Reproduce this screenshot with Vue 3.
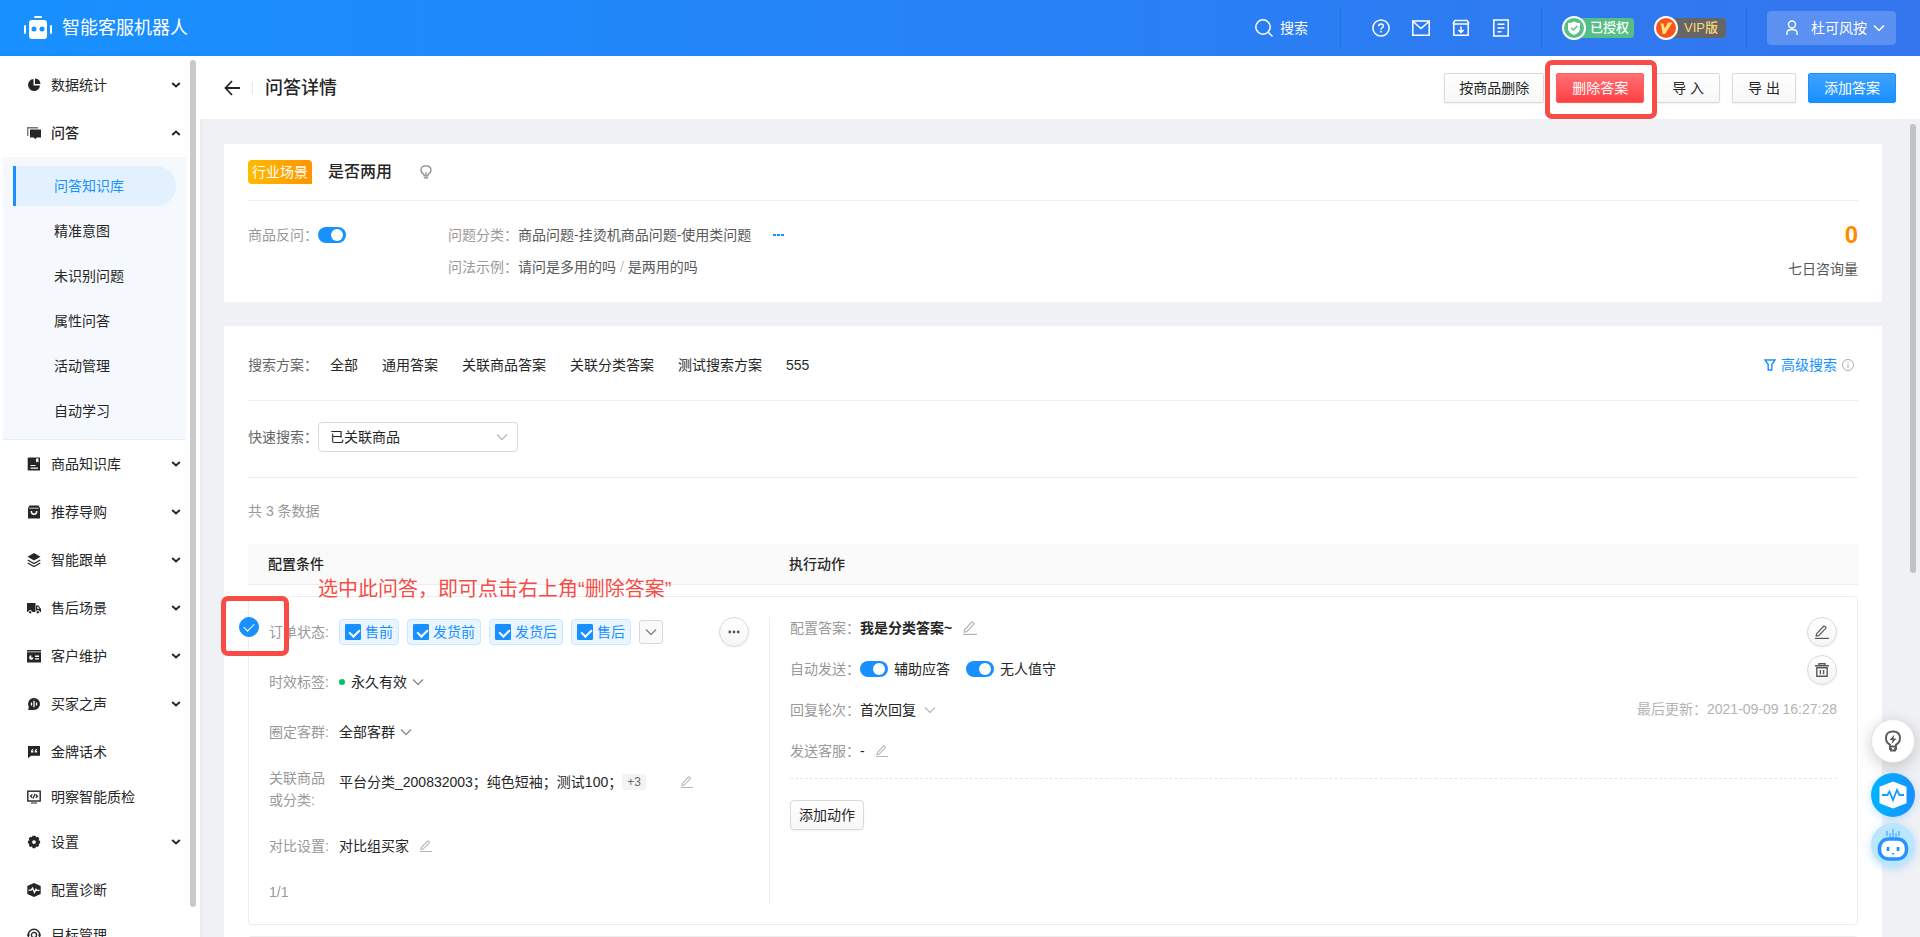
<script setup>
import { ref } from 'vue'

const menuIcons = {
  pie: '<path d="M6.5 1A6 6 0 1 0 13 7.5H6.5z" fill="#262626"/><path d="M8 0.500A6 6 0 0 1 13.500 6H8z" fill="#262626"/>',
  chat: '<path d="M0.700 10V1.700H11" fill="none" stroke="#777" stroke-width="1.400"/><path d="M3 3.500h11v8h-4.200L8.300 13.300 6.800 11.500H3z" fill="#262626"/>',
  book: '<path d="M1.500 0.500h11.500v13H1.500q-.8 0-.8-.8V1.300q0-.8.8-.8z" fill="#262626"/><path d="M9 1.500h2.500v4L10.200 4.500 9 5.500zM3.500 8h5v1h-5zM3.500 10.500H11v1.200H3.500z" fill="#fff"/>',
  bag: '<path d="M2.500 0.500h9L13 3v10.500H1V3z" fill="#262626"/><path d="M2.200 3.200h9.600" stroke="#fff" stroke-width=".8"/><path d="M4.300 6q0 3.300 2.700 3.300T9.700 6" fill="none" stroke="#fff" stroke-width="1.500"/>',
  layers: '<path d="M7 0l6.500 3.700L7 7.400.500 3.700z" fill="#262626"/><path d="M.7 7L7 10.500 13.300 7M.7 10L7 13.500 13.300 10" fill="none" stroke="#262626" stroke-width="1.300"/>',
  truck: '<path d="M0 2h8.500v9H0z" fill="#262626"/><path d="M9 4.500h2.500L14 8v3H9z" fill="#262626"/><path d="M10.200 5.700h1l1.300 2h-2.300z" fill="#fff"/><circle cx="3.200" cy="11.200" r="1.700" fill="#262626" stroke="#fff"/><circle cx="10.800" cy="11.200" r="1.700" fill="#262626" stroke="#fff"/>',
  card: '<path d="M0 1h14v1.500H0zM0 3.300h14V13.500H0z" fill="#262626"/><path d="M4.300 6.300A2.200 2.200 0 1 0 6.500 8.500H4.300zM8 6.500h4v1.400H8zM8 9.200h4v1.400H8z" fill="#fff"/>',
  voice: '<path d="M7 1a6 6 0 1 1 0 12H1.200l.6-3A6 6 0 0 1 7 1z" fill="#262626"/><path d="M4.500 5.500v3M7 3.800v6.400M9.500 5.500v3" stroke="#fff" stroke-width="1.300"/>',
  quote: '<path d="M1 1h12v9.800H4L1 13.200z" fill="#262626"/><path d="M6.300 3.800Q3.800 4.200 4 7.500h2.400V5.800H5.300q.1-.9 1-1.100zM10 3.800Q7.500 4.200 7.700 7.500h2.400V5.800H9q.1-.9 1-1.100z" fill="#fff"/>',
  monitor: '<rect x=".8" y="1.200" width="12.400" height="9.800" fill="none" stroke="#262626" stroke-width="1.400"/><path d="M4 13h6M5.300 4.500L3.500 6.200l1.800 1.700M8.700 4.500l1.800 1.700-1.800 1.700M8 4L6 8.400" fill="none" stroke="#262626" stroke-width="1.200"/>',
  gear: '<path d="M5.500.8h3l.6 1.500 1.700-.6 1.500 2-.7 1.600 1.500.7v2.200l-1.500.7.6 1.700-1.700 1.500-1.500-.6-.7 1.700H5.700L5 11.500l-1.600.6-1.600-1.500.6-1.700L.9 8.200V6l1.500-.7-.7-1.600 1.500-2 1.700.6z" fill="#262626"/><circle cx="7" cy="7.100" r="1.900" fill="#fff"/>',
  pulse: '<path d="M7 0l6.700 3v8L7 14 .3 11V3z" fill="#262626"/><path d="M1.500 7.200h2.700l1.300-2 2 4.200L9 6.300l.8 1h2.700" fill="none" stroke="#fff" stroke-width="1.300"/>',
  target: '<circle cx="7" cy="7" r="5.800" fill="none" stroke="#262626" stroke-width="1.400"/><circle cx="7" cy="7" r="2.600" fill="none" stroke="#262626" stroke-width="1.300"/><path d="M0 7h3M11 7h3M7 11v3" stroke="#262626" stroke-width="1.200"/>'
}

const menu = [
  { icon: 'pie', name: '数据统计', group: true },
  {
    icon: 'chat', name: '问答', group: true, open: true,
    children: ['问答知识库', '精准意图', '未识别问题', '属性问答', '活动管理', '自动学习']
  },
  { icon: 'book', name: '商品知识库', group: true },
  { icon: 'bag', name: '推荐导购', group: true },
  { icon: 'layers', name: '智能跟单', group: true },
  { icon: 'truck', name: '售后场景', group: true },
  { icon: 'card', name: '客户维护', group: true },
  { icon: 'voice', name: '买家之声', group: true },
  { icon: 'quote', name: '金牌话术' },
  { icon: 'monitor', name: '明察智能质检' },
  { icon: 'gear', name: '设置', group: true },
  { icon: 'pulse', name: '配置诊断' },
  { icon: 'target', name: '目标管理' }
]

const activeChild = ref('问答知识库')
const plans = ['全部', '通用答案', '关联商品答案', '关联分类答案', '测试搜索方案', '555']
const states = ref([
  { name: '售前', on: true },
  { name: '发货前', on: true },
  { name: '发货后', on: true },
  { name: '售后', on: true }
])
const askBack = ref(true)
const assist = ref(true)
const unattended = ref(true)
const selected = ref(true)
const quick = ref('已关联商品')

const pen = '<path d="M1.500 8.900L8.600 1.300q.7-.6 1.400 0l.7.700q.6.700 0 1.400L3.700 10.600l-2.500.5z" fill="none" stroke="currentColor" stroke-width="1.200"/><path d="M0 13.400h14" stroke="currentColor" stroke-width="1.200"/>'
const down = '<path d="M1 1.500l5 5 5-5" fill="none" stroke="currentColor" stroke-width="1.500"/>'
</script>

<template>
  <div class="app">
    <header class="topbar">
      <a class="brand" href="#">
        <svg width="28" height="24" viewBox="0 0 28 24" fill="#fff" aria-hidden="true">
          <rect x="10" y="0" width="8" height="2" rx="1" />
          <rect x="5" y="4" width="18" height="19" rx="3" />
          <rect x="0" y="9" width="2" height="9" rx="1" />
          <rect x="26" y="9" width="2" height="9" rx="1" />
          <circle cx="10" cy="13" r="2.500" fill="#1890ff" />
          <circle cx="18" cy="13" r="2.500" fill="#1890ff" />
        </svg>
        <span>智能客服机器人</span>
      </a>
      <div class="tools">
        <button class="bare search" type="button">
          <svg width="18" height="18" viewBox="0 0 18 18" fill="none" stroke="#fff" stroke-width="1.500"><circle cx="8" cy="8" r="7.200" /><path d="M13.200 13.200l4.300 4.300" /></svg>
          <span>搜索</span>
        </button>
        <i class="sep"></i>
        <nav class="quick-icons">
          <button class="bare" type="button" aria-label="帮助">
            <svg width="18" height="18" viewBox="0 0 18 18" fill="none" stroke="#fff" stroke-width="1.500"><circle cx="9" cy="9" r="8.100" /><path d="M6.700 7.200q0-2.300 2.300-2.300t2.300 2q0 1.200-1.300 1.900-1 .5-1 1.700M9 11.800v1.700" /></svg>
          </button>
          <button class="bare" type="button" aria-label="消息">
            <svg width="18" height="18" viewBox="0 0 18 18" fill="none" stroke="#fff" stroke-width="1.500"><path d="M.8 2h16.400v14.200H.8zM1 2.500l8 7 8-7" /></svg>
          </button>
          <button class="bare" type="button" aria-label="下载">
            <svg width="18" height="18" viewBox="0 0 18 18" fill="none" stroke="#fff" stroke-width="1.500"><path d="M1.800 5v11.200h14.400V5M.8 5h16.400M1 4.500l2-3h12l2 3M9 7.500v6M6.300 11L9 13.500l2.700-2.500" /></svg>
          </button>
          <button class="bare" type="button" aria-label="文档">
            <svg width="18" height="18" viewBox="0 0 18 18" fill="none" stroke="#fff" stroke-width="1.500"><path d="M1.800 1h14.400v16H1.800zM5.500 5.300h7M5.500 9h7M5.500 12.700h4" /></svg>
          </button>
        </nav>
        <i class="sep"></i>
        <div class="badges">
          <a class="badge green" href="#">
            <svg width="24" height="24" viewBox="0 0 24 24"><circle cx="12" cy="12" r="11" fill="#55bf85" stroke="#fff" stroke-width="2" /><path d="M12 5.500q3 1.500 6 1.500v5.500q0 4-6 6.500-6-2.500-6-6.500V7q3 0 6-1.500z" fill="#fff" /><path d="M9 11.800l2.300 2.200 4-4" fill="none" stroke="#55bf85" stroke-width="1.500" /></svg>
            <span>已授权</span>
          </a>
          <a class="badge vip" href="#">
            <svg width="24" height="24" viewBox="0 0 24 24"><circle cx="12" cy="12" r="11" fill="#fa541c" stroke="#fff" stroke-width="2" /><path d="M6 7.500h3.500l1.200 5L14 6.500h4.500L11 18H8.500L7.300 9.500z" fill="#ffdf7e" /></svg>
            <span>VIP版</span>
          </a>
        </div>
        <i class="sep"></i>
        <button class="user" type="button">
          <svg width="12" height="16" viewBox="0 0 12 16" fill="none" stroke="#fff" stroke-width="1.400"><circle cx="6" cy="4.500" r="3.500" /><path d="M1 15v-2q0-3.500 5-3.500t5 3.500v2" /></svg>
          <span>杜可风按</span>
          <svg width="12" height="8" viewBox="0 0 12 8" v-html="down"></svg>
        </button>
      </div>
    </header>

    <div class="body">
      <aside class="sidebar">
        <nav class="menu">
          <template v-for="item in menu" :key="item.name">
            <a href="#" class="item" :class="{ leaf: !item.group, open: item.open }">
              <svg class="mi" width="14" height="14" viewBox="0 0 14 14" v-html="menuIcons[item.icon]"></svg>
              <span>{{ item.name }}</span>
              <svg v-if="item.group" class="arrow" width="10" height="6" viewBox="0 0 10 6"><path d="M1.200 1L5 4.400 8.800 1" fill="none" stroke="#262626" stroke-width="2" /></svg>
            </a>
            <div v-if="item.children" class="submenu">
              <a v-for="c in item.children" :key="c" href="#" :class="{ active: c === activeChild }" @click.prevent="activeChild = c">{{ c }}</a>
            </div>
          </template>
        </nav>
        <i class="thumb side-thumb"></i>
      </aside>

      <main class="main">
        <div class="page-head">
          <a class="back" href="#" aria-label="返回">
            <svg width="16" height="16" viewBox="0 0 16 16" fill="none" stroke="#262626" stroke-width="1.800"><path d="M8 1L1.500 8 8 15M1.500 8H16" /></svg>
          </a>
          <h1>问答详情</h1>
          <div class="actions">
            <button class="btn wide" type="button">按商品删除</button>
            <span class="marked">
              <button class="btn danger" type="button">删除答案</button>
              <i class="ring"></i>
            </span>
            <button class="btn" type="button">导 入</button>
            <button class="btn" type="button">导 出</button>
            <button class="btn primary" type="button">添加答案</button>
          </div>
        </div>

        <div class="content">
          <section class="card intro">
            <div class="intro-head">
              <span class="scene">行业场景</span>
              <h2>是否两用</h2>
              <svg width="12" height="14" viewBox="0 0 12 14" fill="none" stroke="#888" stroke-width="1.200"><path d="M4 9.500Q1 8 1 5.300 1 .8 6 .8t5 4.500Q11 8 8 9.500v1.300H4zM4 12.800h4M6 7v3" /></svg>
            </div>
            <div class="intro-body">
              <div class="field ask">
                <label for="ask-back">商品反问：</label>
                <input id="ask-back" v-model="askBack" class="switch" type="checkbox" role="switch">
              </div>
              <dl>
                <div class="field"><dt>问题分类：</dt><dd>商品问题-挂烫机商品问题-使用类问题</dd>
                  <button class="bare more" type="button" aria-label="更多"><svg width="12" height="4" viewBox="0 0 12 4" fill="#1890ff"><rect y="1" width="3" height="2" /><rect x="4" y="1" width="3" height="2" /><rect x="8" y="1" width="3" height="2" /></svg></button>
                </div>
                <div class="field"><dt>问法示例：</dt><dd>请问是多用的吗 <i>/</i> 是两用的吗</dd></div>
              </dl>
              <div class="stat"><strong>0</strong><span>七日咨询量</span></div>
            </div>
          </section>

          <section class="card">
            <div class="filter plans">
              <span class="label">搜索方案：</span>
              <a v-for="p in plans" :key="p" href="#">{{ p }}</a>
              <a class="advanced" href="#">
                <svg width="12" height="12" viewBox="0 0 12 12" fill="none" stroke="#1890ff" stroke-width="1.400"><path d="M1 1h10L7.800 5.500V11H4.200V5.500z" /></svg>
                <span>高级搜索</span>
                <svg width="12" height="12" viewBox="0 0 12 12" fill="none" stroke="#aaa"><circle cx="6" cy="6" r="5.500" /><path d="M6 5v4M6 3v1" /></svg>
              </a>
            </div>
            <div class="filter fast">
              <label class="label" for="quick">快速搜索：</label>
              <span class="select">
                <select id="quick" v-model="quick"><option>已关联商品</option></select>
                <svg width="12" height="8" viewBox="0 0 12 8" v-html="down"></svg>
              </span>
            </div>
            <p class="count">共 3 条数据</p>

            <table>
              <thead><tr><th class="c1">配置条件</th><th>执行动作</th></tr></thead>
              <tbody>
                <tr>
                  <td class="c1">
                    <input v-model="selected" class="pick" type="checkbox" aria-label="选中此问答">
                    <div class="conds">
                      <div class="cond">
                        <span class="k">订单状态:</span>
                        <label v-for="s in states" :key="s.name" class="tag"><input v-model="s.on" class="tick" type="checkbox">{{ s.name }}</label>
                        <button class="mini" type="button" aria-label="展开"><svg width="12" height="8" viewBox="0 0 12 8" v-html="down"></svg></button>
                        <button class="round dots" type="button" aria-label="更多"><svg width="12" height="4" viewBox="0 0 12 4" fill="#555"><circle cx="1.800" cy="2" r="1.400" /><circle cx="6" cy="2" r="1.400" /><circle cx="10.200" cy="2" r="1.400" /></svg></button>
                      </div>
                      <div class="cond">
                        <span class="k">时效标签:</span>
                        <button class="bare drop" type="button"><i class="dot"></i>永久有效<svg width="12" height="8" viewBox="0 0 12 8" v-html="down"></svg></button>
                      </div>
                      <div class="cond">
                        <span class="k">圈定客群:</span>
                        <button class="bare drop" type="button">全部客群<svg width="12" height="8" viewBox="0 0 12 8" v-html="down"></svg></button>
                      </div>
                      <div class="cond two">
                        <span class="k">关联商品<br>或分类:</span>
                        <div class="goods">
                          <span>平台分类_200832003；纯色短袖；测试100；</span><em>+3</em>
                          <button class="bare edit" type="button" aria-label="编辑"><svg width="12" height="12" viewBox="0 0 14 14" v-html="pen"></svg></button>
                        </div>
                      </div>
                      <div class="cond">
                        <span class="k">对比设置:</span>
                        <span>对比组买家</span>
                        <button class="bare edit near" type="button" aria-label="编辑"><svg width="12" height="12" viewBox="0 0 14 14" v-html="pen"></svg></button>
                      </div>
                      <div class="pager">1/1</div>
                    </div>
                    <i class="ring"></i>
                    <p class="note">选中此问答，即可点击右上角“删除答案”</p>
                  </td>
                  <td class="c2">
                    <div class="exec">
                      <div class="exec-top">
                        <div class="exec-info">
                          <div class="line"><span class="k">配置答案：</span><b>我是分类答案~</b><button class="bare edit near" type="button" aria-label="编辑"><svg width="14" height="14" viewBox="0 0 14 14" v-html="pen"></svg></button></div>
                          <div class="line">
                            <span class="k">自动发送：</span>
                            <label class="sw"><input v-model="assist" class="switch" type="checkbox" role="switch">辅助应答</label>
                            <label class="sw"><input v-model="unattended" class="switch" type="checkbox" role="switch">无人值守</label>
                          </div>
                          <div class="line"><span class="k">回复轮次：</span><button class="bare drop pale" type="button">首次回复<svg width="12" height="8" viewBox="0 0 12 8" v-html="down"></svg></button></div>
                          <div class="line"><span class="k">发送客服：</span><span>-</span><button class="bare edit near" type="button" aria-label="编辑"><svg width="12" height="14" viewBox="0 0 14 14" v-html="pen"></svg></button></div>
                        </div>
                        <div class="exec-side">
                          <button class="round" type="button" aria-label="编辑答案"><svg width="14" height="14" viewBox="0 0 14 14" v-html="pen"></svg></button>
                          <button class="round" type="button" aria-label="删除"><svg width="14" height="14" viewBox="0 0 14 14" fill="none" stroke="currentColor" stroke-width="1.400"><path d="M0 2.700h14M4 2V.7h6V2M1.800 4.700h10.400v8.600H1.800zM5.400 7v4.200M8.600 7v4.200" /></svg></button>
                          <time>最后更新：2021-09-09 16:27:28</time>
                        </div>
                      </div>
                      <button class="btn add" type="button">添加动作</button>
                    </div>
                  </td>
                </tr>
              </tbody>
              <tbody>
                <tr class="next"><td class="c1"></td><td class="c2"></td></tr>
              </tbody>
            </table>
          </section>
        </div>
        <i class="thumb main-thumb"></i>
      </main>
    </div>

    <div class="floats">
      <button class="float tip" type="button" aria-label="提示">
        <svg width="18" height="22" viewBox="0 0 18 22"><path d="M6 16.500v-1.800Q2 12.500 2 8.200 2 1.500 9 1.500t7 6.700q0 4.300-4 6.500v1.800zM6 16.500v2.500h1v1.500h4V19h1v-2.500" fill="none" stroke="#595959" stroke-width="1.900" /><path d="M10.500 4.500L5.500 10h3L7.500 14l5-5.500h-3z" fill="#595959" /></svg>
      </button>
      <button class="float diag" type="button" aria-label="诊断">
        <svg width="28" height="28" viewBox="0 0 28 28"><path d="M14 .5l13.500 5.300v16.400L14 27.500.5 22.200V5.800z" fill="#fff" /><path d="M3 14h5.500l2-3.500 3.500 8.500 4-10 2.500 5H25" fill="none" stroke="#159cff" stroke-width="1.800" /></svg>
      </button>
      <button class="float bot" type="button" aria-label="机器人">
        <svg width="32" height="32" viewBox="0 0 32 32"><path d="M10 2v5M13 4v4M16 0v9M19 4v4M22 2v5" stroke="#40a9ff" stroke-width="1.200" /><rect x="2.500" y="10" width="27" height="20" rx="9" fill="#fff" stroke="#2b93ff" stroke-width="3.500" /><path d="M11 18v4M21 18v4" stroke="#1890ff" stroke-width="2.600" /><path d="M14.500 24h3l-1.500 2z" fill="#1890ff" /></svg>
      </button>
    </div>
  </div>
</template>

<style>
body { margin: 0; overflow: hidden; }
</style>

<style scoped>
* { box-sizing: border-box; }
.app { position: relative; display: flex; flex-direction: column; height: 100vh; overflow: hidden; font: 14px/22px "Liberation Sans", "Noto Sans CJK SC", sans-serif; color: #262626; background: #f0f1f5; }
a { color: inherit; text-decoration: none; }
i, em { font-style: normal; }
h1, h2, p, dl, dd { margin: 0; }
svg { display: block; flex: none; }
button, select, input { font: inherit; color: inherit; margin: 0; }
button { cursor: pointer; }
.bare { display: flex; align-items: center; padding: 0; border: 0; background: none; }

.topbar { display: flex; align-items: center; justify-content: space-between; flex: none; height: 56px; padding: 0 24px; color: #fff; background: linear-gradient(90deg, #1890ff, #3475ee); }
.brand { display: flex; align-items: center; gap: 10px; font-size: 18px; }
.tools { display: flex; align-items: center; }
.search { gap: 7px; margin-right: 32px; }
.sep { width: 1px; height: 40px; background: rgba(0, 0, 0, 0.1); }
.quick-icons { display: flex; gap: 22px; margin: 0 31px; }
.badges { display: flex; gap: 20px; margin: 0 20px; }
.badge { display: flex; align-items: center; width: 72px; font-size: 13px; font-weight: 500; line-height: 20px; border-radius: 12px 4px 4px 12px; }
.badge svg { position: relative; }
.badge span { flex: 1; margin-left: -12px; padding-left: 16px; border-radius: 0 4px 4px 0; white-space: nowrap; }
.green span { background: #55bf85; }
.vip span { padding-left: 18px; color: #f7d677; background: #666; }
.user { display: flex; align-items: center; height: 34px; margin-left: 20px; padding: 0 11px 0 19px; border: 0; border-radius: 4px; color: #fff; background: rgba(255, 255, 255, 0.2); }
.user span { margin: 0 6px 0 13px; }

.body { display: flex; flex: 1; min-height: 0; }
.sidebar { position: relative; z-index: 1; flex: none; width: 200px; overflow: hidden; background: #fff; box-shadow: 0 0 5px rgba(0, 0, 0, 0.08); }
.menu { padding-top: 5px; }
.item { display: flex; align-items: center; height: 48px; padding: 0 19px 0 27px; }
.item.leaf { height: 45px; padding-top: 3px; }
.item .mi { margin-right: 10px; }
.item .arrow { margin-left: auto; }
.item.open { font-weight: 500; }
.item.open .arrow { transform: rotate(180deg); }
.submenu { display: flex; flex-direction: column; gap: 5px; margin: 0 14px 0 3px; padding: 9px 10px 8px; border-bottom: 1px solid #e6eef8; background: #f5f9fd; }
.submenu a { padding-left: 38px; border-left: 3px solid transparent; line-height: 40px; }
.submenu .active { border-color: #1890ff; border-radius: 0 20px 20px 0; color: #1890ff; background: #e3f0fe; }
.thumb { position: absolute; width: 6px; border-radius: 3px; background: #c9c9c9; }
.side-thumb { top: 4px; right: 4px; bottom: 30px; }
.main-thumb { top: 68px; right: 4px; height: 449px; background: #c1c2c4; }

.main { position: relative; display: flex; flex-direction: column; flex: 1; min-width: 0; }
.page-head { position: relative; z-index: 2; display: flex; align-items: center; flex: none; height: 63px; padding: 0 24px; background: #fff; }
.back { padding-right: 12px; }
h1 { padding-left: 13px; font-size: 18px; font-weight: 500; background: linear-gradient(#e8e8e8, #e8e8e8) left center / 1px 12px no-repeat; }
.actions { display: flex; gap: 12px; margin-left: auto; }
.btn { height: 30px; padding: 0 15px; border: 1px solid #d9d9d9; border-radius: 2px; line-height: 28px; white-space: nowrap; background: linear-gradient(#fff, #f7f7f7); box-shadow: 0 1px 2px rgba(0, 0, 0, 0.06); }
.btn.wide { padding: 0 14px; }
.btn.danger { border-color: #ff5c5c; color: #fff; background: linear-gradient(#ff7072, #ff4144); }
.btn.primary { border-color: #1890ff; color: #fff; background: linear-gradient(#40a2ff, #1890ff); }
.marked { position: relative; }
.ring { position: absolute; border: 5px solid #f84c47; border-radius: 7px; pointer-events: none; }
.marked .ring { inset: -13px -13px -16px -11px; }

.content { flex: 1; min-height: 0; overflow: hidden; padding: 25px 38px 0 24px; }
.card { margin-bottom: 24px; padding: 0 24px; background: #fff; }
.intro-head { display: flex; align-items: center; height: 57px; border-bottom: 1px solid #ededed; }
.scene { padding: 0 4px; border-radius: 4px 4px 0 4px; line-height: 24px; color: #fff; background: linear-gradient(90deg, #ffbb00, #ff9500); }
h2 { margin: 0 28px 0 16px; font-size: 16px; font-weight: 500; }
.intro-body { display: flex; padding: 23px 0 14px; }
.field { display: flex; align-items: center; height: 22px; margin-bottom: 10px; color: #595959; }
.ask { width: 200px; }
.ask label, dt { width: 70px; color: #999; }
dd i { color: #bbb; }
.more { margin-left: 22px; }
.stat { display: flex; flex-direction: column; align-items: flex-end; gap: 12px; margin-left: auto; color: #595959; }
.stat strong { font-size: 24px; color: #ff8a00; }
.switch { position: relative; flex: none; width: 28px; height: 16px; appearance: none; border-radius: 8px; background: #bfbfbf; }
.switch::before { content: ""; position: absolute; top: 2px; left: 2px; width: 12px; height: 12px; border-radius: 50%; background: #fff; }
.switch:checked { background: #1890ff; }
.switch:checked::before { left: 13px; }

.filter { display: flex; align-items: center; border-bottom: 1px solid #ededed; }
.fast { height: 77px; padding-bottom: 4px; }
.plans { gap: 24px; height: 75px; padding-top: 4px; }
.plans .label { margin-right: -12px; }
.label { color: #666; }
.advanced { display: flex; align-items: center; gap: 5px; margin: 0 4px 0 auto; color: #1890ff; }
.select { position: relative; width: 200px; color: #262626; }
.select select { display: block; width: 100%; height: 30px; padding: 0 30px 0 11px; appearance: none; border: 1px solid #d9d9d9; border-radius: 4px; background: #fff; }
.select svg { position: absolute; top: 11px; right: 10px; color: #bfbfbf; pointer-events: none; }
.count { padding: 22px 0; color: #999; }

table { width: 100%; border-spacing: 0; table-layout: fixed; }
th { height: 41px; padding: 0 20px; border-bottom: 1px solid #ededed; text-align: left; font-weight: 500; background: #fafafa; }
.c1 { width: 521px; }
tbody::before { content: ""; display: block; height: 11px; }
td { position: relative; padding: 20px 0; border: solid #ededed; border-width: 1px 0; vertical-align: top; }
td.c1 { border-left-width: 1px; border-radius: 4px 0 0 4px; }
td.c2 { border-right-width: 1px; border-radius: 0 4px 4px 0; }
.conds { display: flex; flex-direction: column; gap: 20px; padding: 0 20px; }
.cond { display: flex; align-items: center; height: 30px; }
.cond.two { align-items: flex-start; height: 44px; }
.k { flex: none; width: 70px; color: #999; }
.tag { display: flex; align-items: center; gap: 4px; height: 26px; margin-right: 8px; padding: 0 5px; border: 1px solid #cbe6ff; border-radius: 4px; color: #1890ff; background: #eaf5ff; }
.tick { position: relative; width: 16px; height: 16px; appearance: none; border: 1px solid #1890ff; border-radius: 1px; background: #fff; }
.tick:checked { background: #1890ff; }
.tick:checked::before { content: ""; position: absolute; top: 2px; left: 5px; width: 5px; height: 8px; border: solid #fff; border-width: 0 2px 2px 0; transform: rotate(45deg); }
.mini { display: flex; align-items: center; justify-content: center; width: 24px; height: 24px; padding: 0; border: 1px solid #d9d9d9; border-radius: 3px; color: #888; background: #fafafa; }
.round { display: flex; align-items: center; justify-content: center; width: 30px; height: 30px; padding: 0; border: 1px solid #d9d9d9; border-radius: 50%; color: #595959; background: linear-gradient(#fff, #f5f5f5); box-shadow: 0 1px 2px rgba(0, 0, 0, 0.05); }
.dots { margin-left: auto; }
.drop svg { margin-left: 5px; color: #8c8c8c; }
.drop.pale svg { margin-left: 8px; color: #bfbfbf; }
.dot { width: 6px; height: 6px; margin-right: 6px; border-radius: 50%; background: #07c160; }
.goods { display: flex; flex: 1; align-items: center; height: 30px; }
.goods em { padding: 0 5px; border-radius: 2px; font-size: 12px; line-height: 16px; color: #666; background: #f4f4f4; }
.edit { margin-left: auto; color: #b3b3b3; }
.goods .edit { margin-right: 56px; }
.edit.near { margin-left: 11px; }
.pager { color: #999; }
.pick { position: absolute; top: 20px; left: -10px; width: 20px; height: 20px; appearance: none; border: 1px solid #1890ff; border-radius: 50%; background: #fff; }
.pick:checked { background: #1890ff; }
.pick:checked::before { content: ""; position: absolute; top: 3px; left: 6px; width: 5px; height: 9px; border: solid #fff; border-width: 0 1px 1px 0; transform: rotate(45deg); }
td .ring { top: -1px; left: -28px; width: 68px; height: 60px; }
.note { position: absolute; top: -22px; left: 69px; font-size: 20px; line-height: 28px; white-space: nowrap; color: #f84c47; }

.exec { min-height: 287px; padding: 0 20px; border-left: 1px solid #ededed; }
.exec-top { display: flex; justify-content: space-between; padding-bottom: 16px; margin-bottom: 21px; border-bottom: 1px dashed #e8e8e8; }
.exec-info { display: flex; flex-direction: column; gap: 19px; }
.line { display: flex; align-items: center; height: 22px; }
.line b { font-weight: 700; }
.sw { display: flex; align-items: center; gap: 6px; margin-right: 16px; }
.exec-side { display: flex; flex-direction: column; align-items: flex-end; gap: 8px; }
.exec-side time { padding-top: 5px; color: #b3b3b3; }
.add { padding: 0 8px; border-radius: 4px; }
.next td { height: 60px; }

.floats { position: absolute; right: 5px; bottom: 70px; z-index: 3; display: flex; flex-direction: column; gap: 6px; }
.float { display: flex; align-items: center; justify-content: center; width: 44px; height: 44px; padding: 0; border: 0; border-radius: 50%; box-shadow: 0 2px 8px rgba(24, 144, 255, 0.25); }
.tip { margin-bottom: 4px; border: 1px solid #e4e4e4; background: #fff; box-shadow: 0 4px 16px rgba(0, 0, 0, 0.2); }
.diag { background: linear-gradient(90deg, #00b4ff, #1890ff); }
.bot { background: #bae7ff; }
</style>
